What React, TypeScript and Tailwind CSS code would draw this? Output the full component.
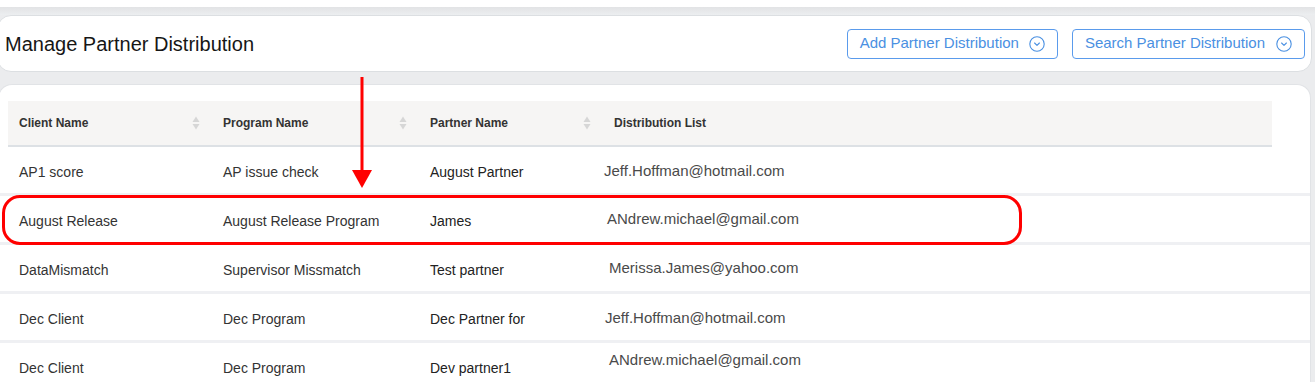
import React from "react";

type Row = {
  client: string;
  program: string;
  partner: string;
  email: string;
  emailCls: string;
};

const rows: Row[] = [
  { client: "AP1 score", program: "AP issue check", partner: "August Partner", email: "Jeff.Hoffman@hotmail.com", emailCls: "pl-[1px] -translate-y-[1px]" },
  { client: "August Release", program: "August Release Program", partner: "James", email: "ANdrew.michael@gmail.com", emailCls: "pl-[4px] -translate-y-[2px]" },
  { client: "DataMismatch", program: "Supervisor Missmatch", partner: "Test partner", email: "Merissa.James@yahoo.com", emailCls: "pl-[6px] -translate-y-[2px]" },
  { client: "Dec Client", program: "Dec Program", partner: "Dec Partner for", email: "Jeff.Hoffman@hotmail.com", emailCls: "pl-[2px] -translate-y-[1px]" },
  { client: "Dec Client", program: "Dec Program", partner: "Dev partner1", email: "ANdrew.michael@gmail.com", emailCls: "pl-[6px] -translate-y-[8px]" },
];

function SortIcon() {
  return (
    <svg width="8" height="14" viewBox="0 0 8 14" className="shrink-0">
      <path d="M4 0.5 L7.5 6 L0.5 6 Z" fill="#d6d6d6" />
      <path d="M4 13.5 L7.5 8 L0.5 8 Z" fill="#d6d6d6" />
    </svg>
  );
}

function CircleChevron() {
  return (
    <svg width="16" height="16" viewBox="0 0 16 16" className="shrink-0">
      <circle cx="8" cy="8" r="7.2" fill="none" stroke="#4a90e2" strokeWidth="1.1" />
      <path d="M5.6 7 L8 9.4 L10.4 7" fill="none" stroke="#4a90e2" strokeWidth="1.1" strokeLinecap="round" strokeLinejoin="round" />
    </svg>
  );
}

function HeadCell({ label, w, sort }: { label: string; w: string; sort?: boolean }) {
  return (
    <div className={`${w} flex items-center justify-between pl-[11px] pr-[12px]`}>
      <span className="text-[12px] font-bold text-[#333333]">{label}</span>
      {sort ? <SortIcon /> : null}
    </div>
  );
}

export default function App() {
  return (
    <div className="relative w-[1315px] h-[382px] overflow-hidden bg-white font-['Liberation_Sans',Arial,Helvetica,sans-serif]">
      <div className="h-[7px] bg-white" />
      <div className="bg-[#ebecee] h-[375px]">
        <div className="h-[8px] bg-gradient-to-b from-[#e2e3e5] to-[#eceef0]" />
        {/* Header card */}
        <div className="-ml-[3px] mr-[3px] h-[57px] bg-white rounded-[14px] border border-[#dcdfe2] flex items-center justify-between pl-[7px] pr-[6px]">
          <h1 className="text-[20px] text-[#161616] leading-none">Manage Partner Distribution</h1>
          <div className="flex items-center gap-[14px]">
            <button className="h-[30px] flex items-center gap-[10px] px-[12px] border border-[#5a9bec] rounded-[4px] text-[15px] text-[#4a90e2] bg-white">
              <span>Add Partner Distribution</span>
              <CircleChevron />
            </button>
            <button className="h-[30px] flex items-center gap-[11px] px-[12px] border border-[#5a9bec] rounded-[4px] text-[15px] text-[#4a90e2] bg-white">
              <span>Search Partner Distribution</span>
              <CircleChevron />
            </button>
          </div>
        </div>
        <div className="h-[12px]" />
        {/* Table card */}
        <div className="-ml-[2px] mr-[4px] h-[300px] bg-white rounded-t-[14px] border border-[#e1e3e6] border-b-0 pt-[16px]">
          <div className="ml-[9px] w-[1264px] h-[46px] bg-[#f6f5f4] border-b-2 border-[#dde1e5] flex">
            <HeadCell label="Client Name" w="w-[204px]" sort />
            <HeadCell label="Program Name" w="w-[207px]" sort />
            <HeadCell label="Partner Name" w="w-[184px]" sort />
            <HeadCell label="Distribution List" w="flex-1" />
          </div>
          {rows.map((r, i) => (
            <div key={i} className="h-[49px] border-b-[3px] border-[#eff0f3] pl-[9px] pt-[4px] flex items-center text-[14px] text-[#333333]">
              <div className="w-[204px] pl-[11px] whitespace-nowrap">{r.client}</div>
              <div className="w-[207px] pl-[11px] whitespace-nowrap">{r.program}</div>
              <div className="w-[184px] pl-[11px] whitespace-nowrap text-[#222222]">{r.partner}</div>
              <div className={`flex-1 text-[15px] text-[#4a4a4a] whitespace-nowrap ${r.emailCls}`}>{r.email}</div>
            </div>
          ))}
        </div>
      </div>

      {/* Annotation: red arrow */}
      <svg className="absolute left-[350px] top-[76px]" width="24" height="114" viewBox="0 0 24 114">
        <rect x="10.5" y="1" width="3" height="96" fill="#ff0000" />
        <path d="M2 94 L22 94 L12 112 Z" fill="#ff0000" />
      </svg>
      {/* Annotation: red rounded rectangle */}
      <div className="absolute left-[2px] top-[195px] w-[1020px] h-[50px] border-[3px] border-[#ff0000] rounded-[18px]" />
    </div>
  );
}
